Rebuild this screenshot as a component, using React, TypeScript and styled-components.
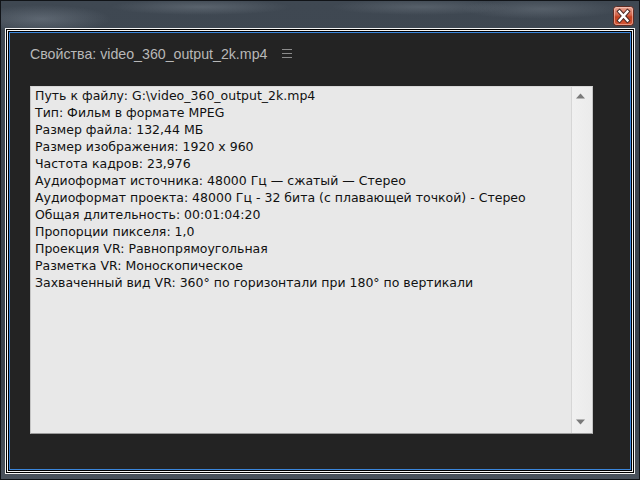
import React from "react";
import styled, { createGlobalStyle } from "styled-components";

const GlobalStyle = createGlobalStyle`
  html, body { margin: 0; padding: 0; background: #000; }
  * { box-sizing: border-box; }
`;

const Window = styled.div`
  width: 640px;
  height: 480px;
  border: 1px solid #111418;
  padding: 0 4px 5px 4px;
  display: flex;
  flex-direction: column;
  background:
    radial-gradient(ellipse 70px 14px at 40px 18px, rgba(150,160,172,0.35), transparent),
    radial-gradient(ellipse 90px 8px at 200px 6px, rgba(140,150,160,0.35), transparent),
    radial-gradient(ellipse 90px 8px at 420px 6px, rgba(140,150,160,0.3), transparent),
    radial-gradient(ellipse 80px 10px at 540px 8px, rgba(140,150,160,0.3), transparent),
    linear-gradient(#3f4852, #3a424c 80%, #4a525c);
`;

const TitleBar = styled.div`
  height: 27px;
  margin: 0 -4px;
  display: flex;
  justify-content: flex-end;
  align-items: flex-start;
  padding: 5px 5px 0 0;
`;

const CloseButton = styled.div`
  width: 21px;
  height: 20px;
  display: flex;
`;

const Frame = styled.div`
  flex: 1;
  border: 1px solid #f4f4f4;
  background: #232323;
  box-shadow:
    inset 0 0 0 1px #000,
    inset 0 0 0 2px #f4f4f4,
    inset 0 0 0 3px #000,
    inset 0 0 0 4px #3a86dc;
  padding: 4px 41px 39px 24px;
  display: flex;
  flex-direction: column;
`;

const Header = styled.div`
  height: 42px;
  margin-bottom: 11px;
  display: flex;
  align-items: center;
  gap: 15px;
`;

const Title = styled.span`
  font-family: "Liberation Sans", Arial, sans-serif;
  font-size: 14.2px;
  color: #b8b8b8;
`;

const MenuIcon = styled.svg`
  width: 10px;
  height: 10px;
  display: block;
`;

const ListBox = styled.div`
  flex: 1;
  display: flex;
  background: #e8e8e8;
  border: 1px solid #c4c4c4;
  border-top-color: #d8d8d8;
  border-bottom-color: #9a9a9a;
`;

const TextArea = styled.div`
  flex: 1;
  padding: 0 0 0 4px;
  font-family: "DejaVu Sans", Verdana, sans-serif;
  font-size: 12.5px;
  line-height: 17px;
  color: #111;
  white-space: nowrap;
`;

const Line = styled.div``;

const ScrollBar = styled.div`
  width: 21px;
  border-left: 1px solid #d6d6d6;
  background: linear-gradient(90deg, #f0f0f0, #ebebeb);
  display: flex;
  flex-direction: column;
  justify-content: space-between;
  padding: 6px 0 8px 4px;
`;

const Arrow = styled.svg`
  width: 9px;
  height: 6px;
  display: block;
`;

const lines = [
  "Путь к файлу: G:\\video_360_output_2k.mp4",
  "Тип: Фильм в формате MPEG",
  "Размер файла: 132,44 МБ",
  "Размер изображения: 1920 x 960",
  "Частота кадров: 23,976",
  "Аудиоформат источника: 48000 Гц — сжатый — Стерео",
  "Аудиоформат проекта: 48000 Гц - 32 бита (с плавающей точкой) - Стерео",
  "Общая длительность: 00:01:04:20",
  "Пропорции пикселя: 1,0",
  "Проекция VR: Равнопрямоугольная",
  "Разметка VR: Моноскопическое",
  "Захваченный вид VR: 360° по горизонтали при 180° по вертикали",
];

export default function App() {
  return (
    <>
      <GlobalStyle />
      <Window>
        <TitleBar>
          <CloseButton>
            <svg width="21" height="20" viewBox="0 0 21 20">
              <defs>
                <linearGradient id="cb" x1="0" y1="0" x2="0" y2="1">
                  <stop offset="0" stopColor="#e9a999" />
                  <stop offset="0.45" stopColor="#d2634a" />
                  <stop offset="0.55" stopColor="#c2401f" />
                  <stop offset="1" stopColor="#d4593a" />
                </linearGradient>
              </defs>
              <rect x="0.5" y="0.5" width="20" height="19" rx="3" fill="url(#cb)" stroke="#5d2a22" />
              <rect x="1.5" y="1.5" width="18" height="17" rx="2" fill="none" stroke="rgba(255,220,210,0.5)" />
              <path d="M6.5 5.5 L14.5 14.5 M14.5 5.5 L6.5 14.5" stroke="#4a2a26" strokeWidth="4.4" strokeLinecap="square" />
              <path d="M6.5 5.5 L14.5 14.5 M14.5 5.5 L6.5 14.5" stroke="#fff" strokeWidth="2.4" strokeLinecap="square" />
            </svg>
          </CloseButton>
        </TitleBar>
        <Frame>
          <Header>
            <Title>Свойства: video_360_output_2k.mp4</Title>
            <MenuIcon viewBox="0 0 10 10">
              <rect x="0" y="0" width="10" height="1" fill="#8c8c8c" />
              <rect x="0" y="4" width="10" height="1" fill="#8c8c8c" />
              <rect x="0" y="8" width="10" height="1" fill="#8c8c8c" />
            </MenuIcon>
          </Header>
          <ListBox>
            <TextArea>
              {lines.map((l) => (
                <Line key={l}>{l}</Line>
              ))}
            </TextArea>
            <ScrollBar>
              <Arrow viewBox="0 0 9 6">
                <polygon points="4.5,0.5 9,5.5 0,5.5" fill="#7a7a7a" />
              </Arrow>
              <Arrow viewBox="0 0 9 6">
                <polygon points="0,0.5 9,0.5 4.5,5.5" fill="#7a7a7a" />
              </Arrow>
            </ScrollBar>
          </ListBox>
        </Frame>
      </Window>
    </>
  );
}
